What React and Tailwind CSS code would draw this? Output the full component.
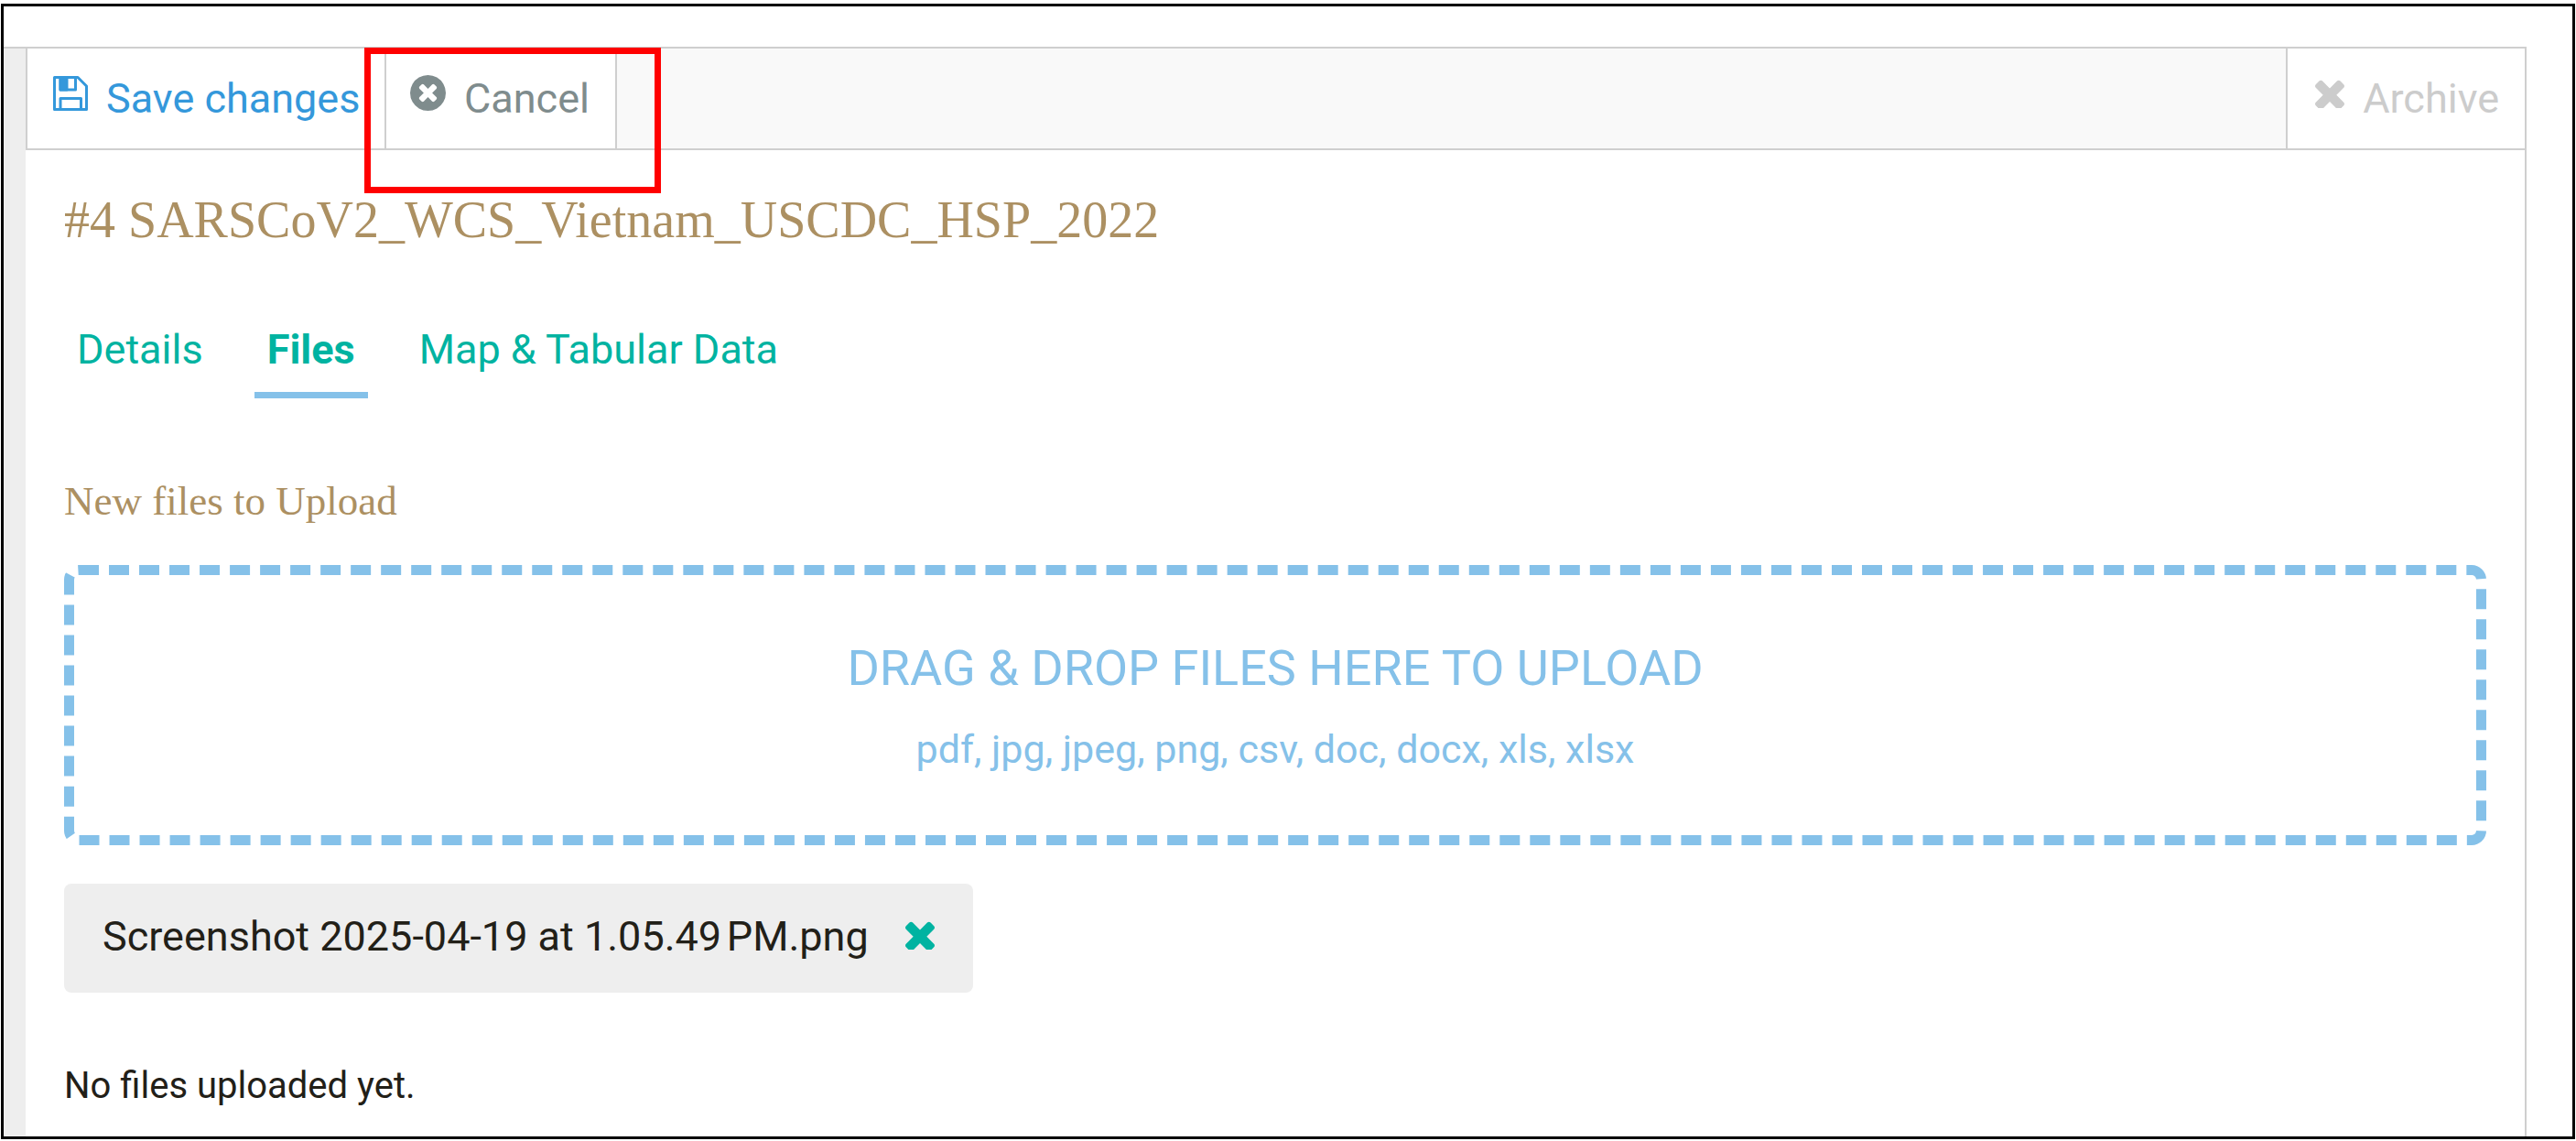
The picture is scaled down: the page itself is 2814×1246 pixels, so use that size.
const TIMES = "M1490 1322q0 40-28 68l-136 136q-28 28-68 28t-68-28l-294-294-294 294q-28 28-68 28t-68-28l-136-136q-28-28-28-68t28-68l294-294-294-294q-28-28-28-68t28-68l136-136q28-28 68-28t68 28l294 294 294-294q28-28 68-28t68 28l136 136q28 28 28 68t-28 68l-294 294 294 294q28 28 28 68z";
const TIMES_CIRCLE = "M1277 1122q0-26-19-45l-181-181 181-181q19-19 19-45 0-27-19-46l-90-90q-19-19-46-19-26 0-45 19l-181 181-181-181q-19-19-45-19-27 0-46 19l-90 90q-19 19-19 46 0 26 19 45l181 181-181 181q-19 19-19 45 0 27 19 46l90 90q19 19 46 19 26 0 45-19l181-181 181 181q19 19 45 19 27 0 46-19l90-90q19-19 19-46zm387-226q0 209-103 385.5t-279.5 279.5-385.5 103-385.5-103-279.5-279.5-103-385.5 103-385.5 279.5-279.5 385.5-103 385.5 103 279.5 279.5 103 385.5z";

function Glyph({ d, box = "128 128 1536 1536", className }) {
  return (
    <svg viewBox={box} fill="currentColor" aria-hidden="true" className={className}>
      <path d={d} />
    </svg>
  );
}

function Floppy({ className }) {
  return (
    <svg viewBox="0 0 38 38" fill="none" stroke="currentColor" strokeWidth="3" strokeLinejoin="round" aria-hidden="true" className={className}>
      <path d="M1.500 1.500H27L36.500 11V36.500H1.500Z" />
      <path d="M8 1.500V15H24.500V1.500" />
      <path d="M8 1.500H15V15H8Z" fill="currentColor" />
      <path d="M8 36V24.500H30.500V36" />
    </svg>
  );
}

function Tab({ active, children }) {
  return (
    <a
      href="#"
      aria-current={active ? "page" : undefined}
      className={active ? "border-b-7 border-[#85c1e9] px-[14px] pb-[18px] font-bold" : "border-b-7 border-transparent px-[14px] pb-[18px]"}
    >
      {children}
    </a>
  );
}

export default function App() {
  return (
    <div className="min-h-screen bg-white px-px pt-1 pb-[2px] font-['Roboto',sans-serif] text-[45px] leading-[56px] text-[#222018]">
      <div className="flex min-h-[1240px] flex-col border-3 border-black pt-11">
        <div className="mr-[50px] flex grow border-t-2 border-r-2 border-[#cfcfcf]">
          <aside className="w-6 shrink-0 bg-[#eeeeee]" />
          <main className="grow">
            <div className="flex h-[111px] border-b-2 border-[#cfcfcf] bg-[#f9f9f9]">
              <button type="button" className="flex w-[392px] items-center gap-5 border-l-2 border-[#cfcfcf] bg-white pl-7 whitespace-nowrap text-[#3498db]">
                <Floppy className="mb-3 size-[38px] shrink-0" />
                <span>Save changes</span>
              </button>
              <div className="relative flex">
                <button type="button" className="flex items-center gap-5 border-x-2 border-[#cfcfcf] bg-white pr-7 pl-[26px] text-[#7f8c8d]">
                  <Glyph d={TIMES_CIRCLE} className="mb-3 size-[39px]" />
                  <span>Cancel</span>
                </button>
                <div className="pointer-events-none absolute -top-px -right-[48px] -left-[22px] h-[159px] border-7 border-[#ff0000]" />
              </div>
              <button type="button" disabled className="ml-auto flex items-center gap-5 border-l-2 border-[#cfcfcf] bg-white pr-7 pl-[30px] text-[#cccccc]">
                <Glyph d={TIMES} box="302 302 1188 1188" className="mb-3 size-8" />
                <span>Archive</span>
              </button>
            </div>

            <div className="px-[42px] pt-10">
              <h1 className="font-['Liberation_Serif',serif] text-[56px] leading-[72px] text-[#ac9062]">
                #4 SARSCoV2_WCS_Vietnam_USCDC_HSP_2022
              </h1>

              <nav className="mt-[78px] flex gap-[42px] text-[#00b3a1]">
                <Tab>Details</Tab>
                <Tab active>Files</Tab>
                <Tab>Map &amp; Tabular Data</Tab>
              </nav>

              <h2 className="mt-[84px] font-['Liberation_Serif',serif] leading-[56px] text-[#ac9062]">
                New files to Upload
              </h2>

              <button type="button" className="mt-[42px] block h-[306px] w-full rounded-2xl border-11 border-dashed border-[#85c1e9] pt-1 text-center text-[#85c1e9]">
                <span className="block text-[54px] leading-[64px]">DRAG &amp; DROP FILES HERE TO UPLOAD</span>
                <span className="mt-7 block text-[43px]">pdf, jpg, jpeg, png, csv, doc, docx, xls, xlsx</span>
              </button>

              <div className="mt-[42px] flex h-[119px] w-fit items-center gap-10 rounded-lg bg-[#eeeeee] px-[42px] pb-1">
                <span>Screenshot 2025-04-19 at 1.05.49{"\u202f"}PM.png</span>
                <button type="button" aria-label="Remove file" className="mb-1 text-[#00b3a1]">
                  <Glyph d={TIMES} box="302 302 1188 1188" className="size-8" />
                </button>
              </div>

              <p className="mt-[74px] text-[40px] leading-[56px]">No files uploaded yet.</p>
            </div>
          </main>
        </div>
      </div>
    </div>
  );
}
